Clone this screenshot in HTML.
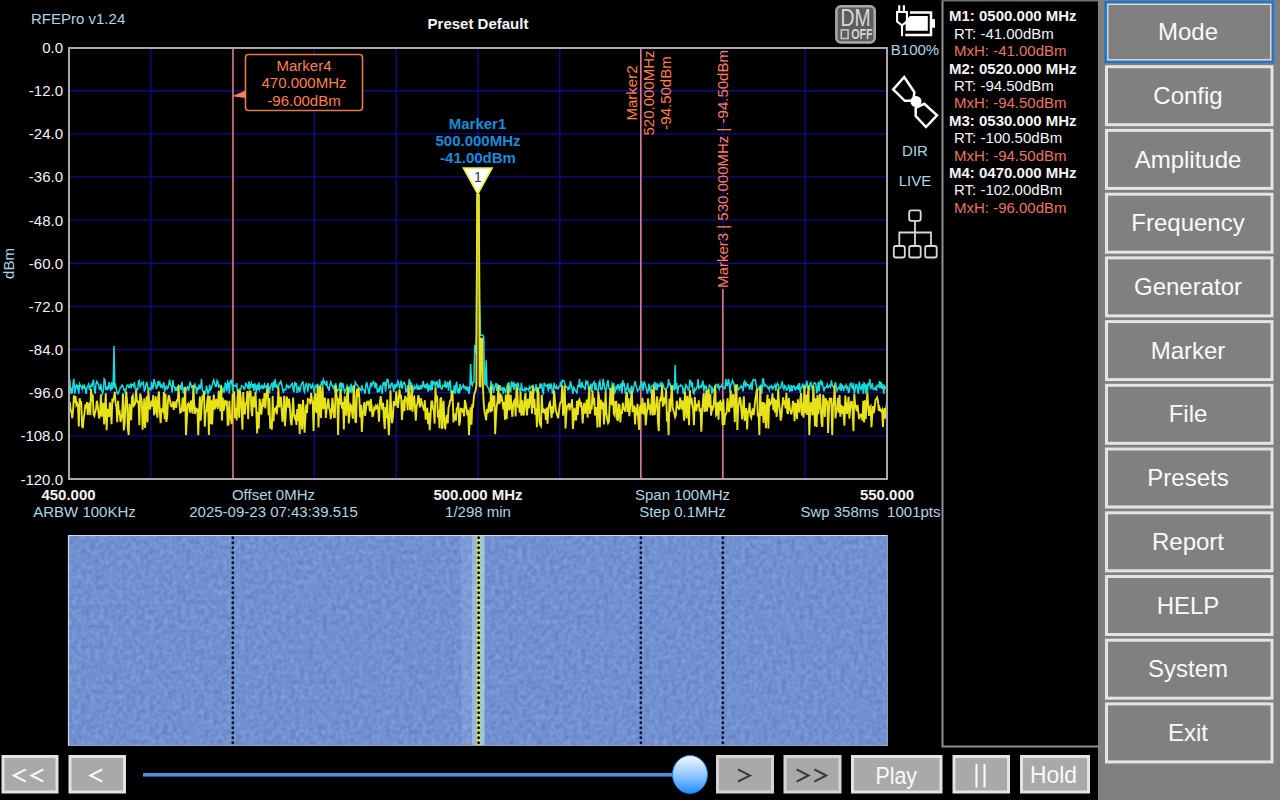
<!DOCTYPE html>
<html><head><meta charset="utf-8"><title>RFEPro</title>
<style>
html,body{margin:0;padding:0;background:#000;width:1280px;height:800px;overflow:hidden}
svg{position:absolute;left:0;top:0;display:block}
text{font-family:"Liberation Sans", sans-serif;}
</style></head><body>
<svg width="1280" height="800" viewBox="0 0 1280 800">
<defs>
<filter id="wfnoise" x="0" y="0" width="100%" height="100%" color-interpolation-filters="sRGB">
<feTurbulence type="fractalNoise" baseFrequency="0.22 0.2" numOctaves="2" seed="4" result="t"></feTurbulence>
<feColorMatrix in="t" type="matrix" values="0.17 0 0 0 0.355  0.17 0 0 0 0.48  0.15 0 0 0 0.74  0 0 0 0 1"></feColorMatrix>
</filter>
<linearGradient id="thumb" x1="0" y1="0" x2="0" y2="1">
<stop offset="0" stop-color="#f4f8ff"></stop><stop offset="0.55" stop-color="#8cc4ff"></stop><stop offset="1" stop-color="#1e8cff"></stop>
</linearGradient>
</defs>

<line x1="150.8" y1="47.5" x2="150.8" y2="479.0" stroke="#0c0c8a" stroke-width="1.35"></line>
<line x1="232.6" y1="47.5" x2="232.6" y2="479.0" stroke="#0c0c8a" stroke-width="1.35"></line>
<line x1="314.4" y1="47.5" x2="314.4" y2="479.0" stroke="#0c0c8a" stroke-width="1.35"></line>
<line x1="396.2" y1="47.5" x2="396.2" y2="479.0" stroke="#0c0c8a" stroke-width="1.35"></line>
<line x1="478.0" y1="47.5" x2="478.0" y2="479.0" stroke="#0c0c8a" stroke-width="1.35"></line>
<line x1="559.8" y1="47.5" x2="559.8" y2="479.0" stroke="#0c0c8a" stroke-width="1.35"></line>
<line x1="641.6" y1="47.5" x2="641.6" y2="479.0" stroke="#0c0c8a" stroke-width="1.35"></line>
<line x1="723.4" y1="47.5" x2="723.4" y2="479.0" stroke="#0c0c8a" stroke-width="1.35"></line>
<line x1="805.2" y1="47.5" x2="805.2" y2="479.0" stroke="#0c0c8a" stroke-width="1.35"></line>
<line x1="69.0" y1="90.7" x2="887.0" y2="90.7" stroke="#0c0c8a" stroke-width="1.35"></line>
<line x1="69.0" y1="133.8" x2="887.0" y2="133.8" stroke="#0c0c8a" stroke-width="1.35"></line>
<line x1="69.0" y1="176.9" x2="887.0" y2="176.9" stroke="#0c0c8a" stroke-width="1.35"></line>
<line x1="69.0" y1="220.1" x2="887.0" y2="220.1" stroke="#0c0c8a" stroke-width="1.35"></line>
<line x1="69.0" y1="263.2" x2="887.0" y2="263.2" stroke="#0c0c8a" stroke-width="1.35"></line>
<line x1="69.0" y1="306.4" x2="887.0" y2="306.4" stroke="#0c0c8a" stroke-width="1.35"></line>
<line x1="69.0" y1="349.6" x2="887.0" y2="349.6" stroke="#0c0c8a" stroke-width="1.35"></line>
<line x1="69.0" y1="392.7" x2="887.0" y2="392.7" stroke="#0c0c8a" stroke-width="1.35"></line>
<line x1="69.0" y1="435.9" x2="887.0" y2="435.9" stroke="#0c0c8a" stroke-width="1.35"></line>
<line x1="233" y1="47.5" x2="233" y2="479.0" stroke="#e07c6c" stroke-width="1.6"></line>
<line x1="640.8" y1="47.5" x2="640.8" y2="479.0" stroke="#e07c6c" stroke-width="1.6"></line>
<line x1="722.8" y1="289" x2="722.8" y2="479.0" stroke="#e07c6c" stroke-width="1.6"></line>
<polyline points="69.00,387.5 69.82,379.5 70.64,393.8 71.45,387.7 72.27,393.5 73.09,383.4 73.91,379.0 74.73,393.8 75.54,386.5 76.36,385.1 77.18,388.0 78.00,385.0 78.82,393.8 79.63,383.9 80.45,385.6 81.27,386.9 82.09,389.1 82.91,384.7 83.72,388.7 84.54,386.1 85.36,388.8 86.18,393.8 87.00,387.1 87.81,386.2 88.63,384.2 89.45,390.1 90.27,387.1 91.09,384.7 91.90,386.4 92.72,382.5 93.54,379.8 94.36,390.2 95.18,393.8 95.99,383.9 96.81,381.4 97.63,383.6 98.45,384.0 99.27,389.2 100.08,389.5 100.90,383.8 101.72,390.2 102.54,393.5 103.36,390.5 104.17,379.0 104.99,380.0 105.81,389.4 106.63,389.6 107.45,386.1 108.26,389.6 109.08,382.2 109.90,387.2 110.72,390.9 111.54,382.2 112.35,389.0 113.17,386.2 113.99,346.0 114.81,388.1 115.63,385.8 116.44,389.4 117.26,393.6 118.08,393.8 118.90,391.5 119.72,389.7 120.53,387.0 121.35,386.7 122.17,384.9 122.99,386.5 123.81,389.8 124.62,389.5 125.44,393.8 126.26,387.6 127.08,385.2 127.90,385.0 128.71,387.4 129.53,387.6 130.35,383.6 131.17,386.9 131.99,384.3 132.80,384.9 133.62,386.2 134.44,382.2 135.26,389.0 136.08,388.2 136.89,389.9 137.71,389.8 138.53,381.4 139.35,380.6 140.17,386.9 140.98,384.9 141.80,382.7 142.62,384.0 143.44,382.6 144.26,391.5 145.07,389.2 145.89,385.3 146.71,381.8 147.53,386.6 148.35,389.9 149.16,388.2 149.98,389.3 150.80,390.0 151.62,381.5 152.44,389.2 153.25,386.9 154.07,379.2 154.89,382.7 155.71,385.7 156.53,389.1 157.34,385.5 158.16,381.1 158.98,384.7 159.80,382.4 160.62,386.6 161.43,385.1 162.25,387.7 163.07,385.4 163.89,382.3 164.71,392.1 165.52,387.2 166.34,386.1 167.16,389.0 167.98,388.1 168.80,384.1 169.61,379.7 170.43,384.7 171.25,385.8 172.07,392.5 172.89,380.0 173.70,386.7 174.52,387.1 175.34,391.0 176.16,387.2 176.98,390.9 177.79,386.7 178.61,385.3 179.43,386.8 180.25,385.9 181.07,390.0 181.88,381.8 182.70,389.3 183.52,393.5 184.34,387.6 185.16,387.3 185.97,390.6 186.79,388.2 187.61,385.9 188.43,391.2 189.25,387.4 190.06,381.8 190.88,384.5 191.70,387.5 192.52,386.5 193.34,385.5 194.15,387.1 194.97,384.3 195.79,387.3 196.61,393.8 197.43,387.0 198.24,390.1 199.06,384.6 199.88,389.1 200.70,386.4 201.52,379.1 202.33,390.7 203.15,391.0 203.97,391.2 204.79,393.8 205.61,393.7 206.42,385.6 207.24,389.2 208.06,393.7 208.88,392.3 209.70,384.7 210.51,389.7 211.33,388.3 212.15,385.8 212.97,382.1 213.79,380.0 214.60,383.2 215.42,386.4 216.24,386.3 217.06,380.5 217.88,381.8 218.69,388.1 219.51,385.3 220.33,385.9 221.15,385.5 221.97,388.7 222.78,391.7 223.60,388.9 224.42,392.5 225.24,382.5 226.06,385.0 226.87,391.3 227.69,381.9 228.51,383.7 229.33,393.8 230.15,380.3 230.96,384.0 231.78,379.5 232.60,391.4 233.42,385.0 234.24,385.4 235.05,386.2 235.87,386.3 236.69,383.2 237.51,392.3 238.33,390.1 239.14,392.0 239.96,389.0 240.78,389.1 241.60,385.6 242.42,386.0 243.23,386.8 244.05,389.4 244.87,388.5 245.69,383.5 246.51,384.2 247.32,386.6 248.14,388.1 248.96,381.4 249.78,389.1 250.60,384.6 251.41,382.8 252.23,387.9 253.05,384.0 253.87,391.0 254.69,383.3 255.50,386.2 256.32,392.7 257.14,384.5 257.96,390.2 258.78,382.3 259.59,389.4 260.41,387.5 261.23,385.9 262.05,388.1 262.87,386.0 263.68,388.9 264.50,384.5 265.32,386.9 266.14,386.2 266.96,391.2 267.77,382.8 268.59,386.8 269.41,393.4 270.23,386.6 271.05,385.3 271.86,383.1 272.68,390.8 273.50,381.4 274.32,387.5 275.14,379.0 275.95,387.5 276.77,384.5 277.59,388.3 278.41,387.8 279.23,383.0 280.04,383.7 280.86,381.4 281.68,383.9 282.50,389.0 283.32,392.9 284.13,389.3 284.95,389.4 285.77,389.9 286.59,384.9 287.41,385.8 288.22,387.9 289.04,386.3 289.86,387.5 290.68,386.2 291.50,384.2 292.31,383.5 293.13,389.4 293.95,392.4 294.77,381.8 295.59,386.5 296.40,383.0 297.22,392.9 298.04,388.1 298.86,386.8 299.68,392.1 300.49,388.8 301.31,384.3 302.13,383.1 302.95,381.2 303.77,390.1 304.58,392.0 305.40,385.1 306.22,383.6 307.04,386.3 307.86,391.6 308.67,384.1 309.49,384.1 310.31,385.0 311.13,388.7 311.95,385.9 312.76,384.1 313.58,389.0 314.40,393.6 315.22,385.8 316.04,385.2 316.85,386.9 317.67,383.7 318.49,389.1 319.31,387.2 320.13,385.5 320.94,384.9 321.76,381.2 322.58,386.8 323.40,379.6 324.22,381.4 325.03,384.1 325.85,384.8 326.67,380.6 327.49,387.6 328.31,387.3 329.12,390.8 329.94,385.2 330.76,382.1 331.58,385.0 332.40,385.4 333.21,387.7 334.03,386.3 334.85,392.1 335.67,383.2 336.49,388.4 337.30,390.9 338.12,389.6 338.94,389.9 339.76,383.9 340.58,383.1 341.39,391.8 342.21,383.6 343.03,383.8 343.85,389.0 344.67,392.3 345.48,389.6 346.30,389.2 347.12,385.7 347.94,387.6 348.76,393.8 349.57,386.1 350.39,392.5 351.21,383.7 352.03,391.3 352.85,389.4 353.66,385.5 354.48,388.9 355.30,382.3 356.12,383.9 356.94,384.8 357.75,385.8 358.57,387.5 359.39,388.8 360.21,388.9 361.03,390.5 361.84,385.1 362.66,389.6 363.48,389.5 364.30,390.7 365.12,393.8 365.93,384.8 366.75,382.2 367.57,386.3 368.39,390.5 369.21,393.8 370.02,386.3 370.84,382.6 371.66,385.9 372.48,383.6 373.30,381.6 374.11,382.9 374.93,388.5 375.75,383.2 376.57,384.2 377.39,392.5 378.20,388.4 379.02,392.1 379.84,387.3 380.66,384.9 381.48,390.8 382.29,393.8 383.11,382.3 383.93,385.6 384.75,381.7 385.57,391.7 386.38,383.1 387.20,379.5 388.02,379.7 388.84,387.7 389.66,386.0 390.47,387.5 391.29,383.4 392.11,383.2 392.93,386.6 393.75,391.8 394.56,384.3 395.38,388.6 396.20,384.7 397.02,386.0 397.84,381.1 398.65,382.9 399.47,388.6 400.29,385.7 401.11,380.6 401.93,388.9 402.74,385.4 403.56,382.7 404.38,382.4 405.20,385.1 406.02,391.7 406.83,391.5 407.65,386.1 408.47,385.5 409.29,379.0 410.11,390.0 410.92,382.9 411.74,384.2 412.56,393.0 413.38,389.9 414.20,386.3 415.01,388.7 415.83,387.5 416.65,385.3 417.47,389.9 418.29,385.3 419.10,389.2 419.92,388.9 420.74,385.0 421.56,389.0 422.38,385.9 423.19,381.2 424.01,386.8 424.83,387.5 425.65,384.3 426.47,388.3 427.28,383.1 428.10,391.6 428.92,384.7 429.74,388.8 430.56,389.8 431.37,380.6 432.19,390.0 433.01,380.6 433.83,384.6 434.65,381.7 435.46,387.4 436.28,382.6 437.10,381.7 437.92,387.4 438.74,387.4 439.55,379.0 440.37,386.3 441.19,388.5 442.01,389.2 442.83,385.3 443.64,385.8 444.46,386.3 445.28,380.8 446.10,388.1 446.92,385.2 447.73,381.7 448.55,390.6 449.37,383.2 450.19,380.4 451.01,391.8 451.82,390.9 452.64,390.7 453.46,393.6 454.28,385.3 455.10,393.6 455.91,385.2 456.73,381.7 457.55,392.8 458.37,388.1 459.19,393.8 460.00,384.1 460.82,389.6 461.64,387.9 462.46,386.8 463.28,385.0 464.09,388.2 464.91,386.9 465.73,388.9 466.55,386.5 467.37,391.2 468.18,386.7 469.00,393.8 469.82,388.7 470.64,363.9 471.46,383.7 472.27,385.5 473.09,381.9 473.91,381.9 474.73,344.9 475.55,353.1 476.36,335.2 477.18,194.9 478.00,194.9 478.82,194.9 479.64,299.2 480.45,335.2 481.27,335.2 482.09,335.2 482.91,335.2 483.73,337.0 484.54,381.9 485.36,385.5 486.18,360.3 487.00,385.5 487.82,387.5 488.63,387.9 489.45,391.9 490.27,390.7 491.09,380.9 491.91,389.7 492.72,383.9 493.54,393.0 494.36,387.9 495.18,386.0 496.00,383.2 496.81,391.0 497.63,384.8 498.45,385.5 499.27,389.6 500.09,385.2 500.90,390.2 501.72,389.8 502.54,387.0 503.36,393.8 504.18,387.3 504.99,390.5 505.81,392.2 506.63,388.5 507.45,384.2 508.27,385.5 509.08,382.4 509.90,391.1 510.72,391.7 511.54,381.4 512.36,385.5 513.17,383.5 513.99,389.9 514.81,384.1 515.63,386.0 516.45,384.6 517.26,386.9 518.08,382.6 518.90,389.3 519.72,390.4 520.54,392.0 521.35,382.8 522.17,389.6 522.99,390.7 523.81,390.3 524.63,388.5 525.44,391.5 526.26,388.0 527.08,389.2 527.90,388.9 528.72,390.4 529.53,386.8 530.35,388.6 531.17,386.5 531.99,386.1 532.81,385.5 533.62,393.8 534.44,388.9 535.26,389.8 536.08,384.2 536.90,392.6 537.71,387.9 538.53,388.0 539.35,388.2 540.17,383.4 540.99,388.5 541.80,383.5 542.62,392.2 543.44,393.5 544.26,382.6 545.08,385.4 545.89,385.2 546.71,386.5 547.53,385.2 548.35,391.3 549.17,383.5 549.98,388.9 550.80,383.4 551.62,386.6 552.44,393.8 553.26,391.6 554.07,382.9 554.89,387.4 555.71,388.4 556.53,386.1 557.35,388.5 558.16,388.9 558.98,386.6 559.80,386.4 560.62,381.5 561.44,386.8 562.25,380.2 563.07,380.5 563.89,380.8 564.71,383.1 565.53,386.5 566.34,386.5 567.16,387.5 567.98,389.6 568.80,387.2 569.62,389.3 570.43,381.1 571.25,385.0 572.07,388.6 572.89,393.8 573.71,387.1 574.52,388.4 575.34,390.9 576.16,391.0 576.98,393.8 577.80,384.9 578.61,387.2 579.43,379.0 580.25,387.1 581.07,387.5 581.89,381.8 582.70,386.5 583.52,386.3 584.34,388.3 585.16,389.1 585.98,381.6 586.79,383.3 587.61,380.8 588.43,388.2 589.25,386.8 590.07,390.1 590.88,383.5 591.70,392.0 592.52,384.9 593.34,383.0 594.16,381.9 594.97,390.3 595.79,383.0 596.61,389.5 597.43,389.7 598.25,391.7 599.06,382.8 599.88,381.0 600.70,389.1 601.52,389.7 602.34,388.2 603.15,379.0 603.97,383.3 604.79,388.9 605.61,391.2 606.43,389.4 607.24,382.7 608.06,380.2 608.88,387.9 609.70,389.4 610.52,388.8 611.33,393.7 612.15,383.7 612.97,385.5 613.79,383.1 614.61,393.1 615.42,391.5 616.24,385.9 617.06,389.7 617.88,384.1 618.70,386.9 619.51,391.2 620.33,384.7 621.15,383.9 621.97,393.8 622.79,380.4 623.60,385.2 624.42,384.2 625.24,393.6 626.06,389.5 626.88,388.2 627.69,383.1 628.51,392.2 629.33,390.1 630.15,393.8 630.97,387.8 631.78,385.7 632.60,393.0 633.42,389.1 634.24,385.1 635.06,381.2 635.87,384.6 636.69,388.0 637.51,391.2 638.33,390.3 639.15,389.3 639.96,386.4 640.78,387.1 641.60,381.0 642.42,385.9 643.24,390.8 644.05,381.4 644.87,383.5 645.69,386.6 646.51,389.5 647.33,393.7 648.14,390.6 648.96,383.7 649.78,389.8 650.60,391.7 651.42,386.2 652.23,386.1 653.05,384.8 653.87,384.6 654.69,381.9 655.51,390.0 656.32,383.4 657.14,390.5 657.96,384.5 658.78,386.3 659.60,386.1 660.41,383.5 661.23,387.0 662.05,382.9 662.87,383.8 663.69,386.5 664.50,389.0 665.32,389.7 666.14,388.8 666.96,387.7 667.78,387.0 668.59,379.0 669.41,384.7 670.23,384.2 671.05,390.0 671.87,385.5 672.68,388.1 673.50,386.3 674.32,390.7 675.14,365.0 675.96,389.0 676.77,383.1 677.59,393.8 678.41,387.0 679.23,385.9 680.05,386.3 680.86,384.8 681.68,385.9 682.50,386.4 683.32,393.8 684.14,389.5 684.95,391.6 685.77,384.7 686.59,385.8 687.41,387.6 688.23,389.9 689.04,389.0 689.86,380.3 690.68,380.7 691.50,387.2 692.32,382.3 693.13,392.7 693.95,393.8 694.77,388.7 695.59,390.1 696.41,389.0 697.22,386.3 698.04,379.0 698.86,389.3 699.68,386.8 700.50,386.0 701.31,387.1 702.13,383.6 702.95,380.6 703.77,391.4 704.59,386.4 705.40,387.9 706.22,385.7 707.04,392.5 707.86,393.3 708.68,389.1 709.49,385.1 710.31,386.3 711.13,386.7 711.95,393.8 712.77,388.3 713.58,389.7 714.40,392.0 715.22,385.5 716.04,384.4 716.86,385.0 717.67,387.0 718.49,385.1 719.31,389.1 720.13,386.7 720.95,386.8 721.76,385.0 722.58,387.2 723.40,387.5 724.22,387.4 725.04,389.3 725.85,379.0 726.67,385.1 727.49,385.4 728.31,379.0 729.13,381.9 729.94,392.5 730.76,384.4 731.58,383.9 732.40,380.2 733.22,382.2 734.03,384.2 734.85,391.2 735.67,385.5 736.49,385.5 737.31,385.1 738.12,390.6 738.94,388.3 739.76,388.4 740.58,386.7 741.40,385.7 742.21,388.0 743.03,391.4 743.85,382.5 744.67,381.2 745.49,387.3 746.30,383.3 747.12,385.3 747.94,384.6 748.76,385.2 749.58,389.7 750.39,384.9 751.21,383.3 752.03,390.2 752.85,379.9 753.67,379.4 754.48,380.4 755.30,379.8 756.12,384.3 756.94,388.2 757.76,389.1 758.57,389.9 759.39,386.5 760.21,386.6 761.03,384.5 761.85,393.8 762.66,379.0 763.48,379.0 764.30,387.0 765.12,384.5 765.94,385.2 766.75,386.0 767.57,387.7 768.39,387.4 769.21,389.9 770.03,386.3 770.84,387.0 771.66,385.8 772.48,390.0 773.30,386.8 774.12,386.8 774.93,384.8 775.75,390.8 776.57,385.4 777.39,383.4 778.21,384.8 779.02,388.3 779.84,388.7 780.66,387.8 781.48,384.3 782.30,381.4 783.11,387.5 783.93,389.3 784.75,385.6 785.57,386.2 786.39,390.2 787.20,389.6 788.02,387.3 788.84,384.5 789.66,391.2 790.48,390.6 791.29,385.2 792.11,391.4 792.93,386.6 793.75,385.7 794.57,387.3 795.38,390.6 796.20,387.2 797.02,388.1 797.84,385.7 798.66,390.0 799.47,383.0 800.29,393.0 801.11,387.6 801.93,386.9 802.75,383.5 803.56,389.1 804.38,385.0 805.20,389.0 806.02,384.3 806.84,380.7 807.65,388.4 808.47,385.4 809.29,390.3 810.11,383.4 810.93,382.6 811.74,386.8 812.56,391.0 813.38,385.5 814.20,382.8 815.02,383.0 815.83,384.0 816.65,393.5 817.47,389.4 818.29,381.8 819.11,391.4 819.92,382.9 820.74,380.2 821.56,384.2 822.38,382.9 823.20,388.1 824.01,391.4 824.83,387.3 825.65,387.7 826.47,387.1 827.29,384.4 828.10,387.5 828.92,386.3 829.74,385.4 830.56,387.0 831.38,380.3 832.19,385.4 833.01,386.6 833.83,387.7 834.65,385.5 835.47,382.1 836.28,386.4 837.10,390.8 837.92,389.0 838.74,387.4 839.56,388.5 840.37,383.0 841.19,391.1 842.01,385.2 842.83,386.4 843.65,391.2 844.46,386.8 845.28,387.3 846.10,385.1 846.92,388.6 847.74,385.9 848.55,392.9 849.37,390.8 850.19,384.1 851.01,383.2 851.83,387.0 852.64,389.1 853.46,383.1 854.28,393.8 855.10,389.8 855.92,384.5 856.73,384.6 857.55,390.7 858.37,393.7 859.19,381.7 860.01,386.4 860.82,390.2 861.64,386.8 862.46,383.7 863.28,393.8 864.10,383.0 864.91,384.3 865.73,393.8 866.55,384.2 867.37,392.5 868.19,382.8 869.00,385.5 869.82,379.0 870.64,389.1 871.46,386.9 872.28,383.2 873.09,389.2 873.91,389.5 874.73,388.3 875.55,387.2 876.37,390.8 877.18,385.2 878.00,385.0 878.82,386.7 879.64,380.8 880.46,388.1 881.27,382.2 882.09,388.9 882.91,384.2 883.73,393.8 884.55,386.2 885.36,387.6 886.18,388.7 887.00,389.1" fill="none" stroke="#16dce0" stroke-width="1.5"></polyline>
<polyline points="69.00,410.7 69.82,402.1 70.64,410.3 71.45,411.3 72.27,418.2 73.09,410.2 73.91,395.4 74.73,403.1 75.54,396.2 76.36,405.0 77.18,403.4 78.00,405.7 78.82,426.4 79.63,398.3 80.45,402.2 81.27,402.2 82.09,426.7 82.91,427.2 83.72,417.7 84.54,413.0 85.36,404.4 86.18,408.3 87.00,402.0 87.81,415.0 88.63,404.4 89.45,403.4 90.27,415.2 91.09,388.7 91.90,401.6 92.72,394.5 93.54,414.7 94.36,416.0 95.18,411.6 95.99,409.0 96.81,400.8 97.63,405.0 98.45,412.8 99.27,418.5 100.08,413.6 100.90,394.2 101.72,416.8 102.54,405.1 103.36,403.0 104.17,424.4 104.99,407.3 105.81,393.2 106.63,430.3 107.45,411.4 108.26,409.0 109.08,416.9 109.90,402.3 110.72,408.5 111.54,424.1 112.35,398.6 113.17,400.3 113.99,397.3 114.81,391.7 115.63,403.8 116.44,406.5 117.26,422.3 118.08,400.9 118.90,414.6 119.72,412.8 120.53,421.9 121.35,418.6 122.17,413.7 122.99,393.4 123.81,430.5 124.62,424.1 125.44,405.1 126.26,391.7 127.08,401.4 127.90,429.0 128.71,435.1 129.53,403.8 130.35,416.0 131.17,420.3 131.99,396.9 132.80,395.5 133.62,406.0 134.44,405.1 135.26,403.0 136.08,390.0 136.89,400.9 137.71,402.0 138.53,401.7 139.35,425.3 140.17,393.5 140.98,397.2 141.80,401.9 142.62,429.8 143.44,414.9 144.26,398.4 145.07,428.0 145.89,409.9 146.71,396.4 147.53,422.4 148.35,389.9 149.16,401.6 149.98,409.5 150.80,404.2 151.62,400.6 152.44,406.5 153.25,395.0 154.07,415.2 154.89,412.4 155.71,396.2 156.53,407.5 157.34,417.6 158.16,397.3 158.98,391.5 159.80,412.8 160.62,423.2 161.43,409.3 162.25,409.5 163.07,411.1 163.89,392.1 164.71,419.2 165.52,393.8 166.34,421.9 167.16,416.6 167.98,400.8 168.80,395.2 169.61,398.2 170.43,404.0 171.25,406.2 172.07,406.1 172.89,401.4 173.70,409.8 174.52,404.7 175.34,401.4 176.16,407.8 176.98,399.3 177.79,401.5 178.61,385.5 179.43,404.2 180.25,412.6 181.07,412.0 181.88,407.9 182.70,397.5 183.52,411.6 184.34,403.5 185.16,387.3 185.97,435.1 186.79,420.3 187.61,405.1 188.43,403.4 189.25,405.1 190.06,412.6 190.88,400.5 191.70,404.7 192.52,413.6 193.34,385.5 194.15,403.8 194.97,414.0 195.79,408.9 196.61,410.3 197.43,408.5 198.24,435.1 199.06,413.2 199.88,396.6 200.70,420.8 201.52,408.5 202.33,397.2 203.15,398.3 203.97,391.2 204.79,426.8 205.61,411.7 206.42,411.6 207.24,400.9 208.06,395.6 208.88,435.1 209.70,395.7 210.51,423.9 211.33,400.2 212.15,424.4 212.97,405.8 213.79,394.5 214.60,409.5 215.42,405.7 216.24,398.9 217.06,406.2 217.88,408.8 218.69,390.7 219.51,396.1 220.33,411.1 221.15,385.5 221.97,420.6 222.78,397.6 223.60,410.8 224.42,406.3 225.24,399.9 226.06,405.3 226.87,400.7 227.69,424.8 228.51,424.6 229.33,400.9 230.15,418.5 230.96,419.2 231.78,424.2 232.60,393.7 233.42,399.5 234.24,391.4 235.05,418.3 235.87,407.8 236.69,420.5 237.51,399.3 238.33,390.1 239.14,417.7 239.96,390.4 240.78,396.8 241.60,409.8 242.42,429.8 243.23,392.1 244.05,408.9 244.87,414.5 245.69,403.3 246.51,403.2 247.32,391.1 248.14,419.2 248.96,395.1 249.78,391.2 250.60,391.6 251.41,409.8 252.23,416.1 253.05,396.4 253.87,406.5 254.69,406.4 255.50,391.9 256.32,410.7 257.14,433.4 257.96,412.1 258.78,428.5 259.59,398.7 260.41,404.3 261.23,414.6 262.05,407.9 262.87,398.5 263.68,406.9 264.50,393.0 265.32,408.5 266.14,396.2 266.96,391.2 267.77,389.9 268.59,415.3 269.41,398.0 270.23,428.7 271.05,419.9 271.86,429.7 272.68,395.9 273.50,421.5 274.32,407.9 275.14,409.9 275.95,408.1 276.77,414.4 277.59,405.2 278.41,387.8 279.23,407.3 280.04,401.9 280.86,396.6 281.68,410.0 282.50,421.8 283.32,414.0 284.13,395.8 284.95,426.2 285.77,414.5 286.59,396.6 287.41,399.0 288.22,407.7 289.04,398.8 289.86,406.0 290.68,420.9 291.50,425.2 292.31,414.9 293.13,397.5 293.95,414.1 294.77,417.9 295.59,416.4 296.40,424.9 297.22,409.1 298.04,421.0 298.86,403.7 299.68,434.1 300.49,404.1 301.31,415.0 302.13,429.5 302.95,399.7 303.77,410.9 304.58,432.7 305.40,417.6 306.22,404.6 307.04,412.9 307.86,399.1 308.67,399.5 309.49,400.4 310.31,404.2 311.13,392.9 311.95,400.4 312.76,402.8 313.58,431.0 314.40,397.8 315.22,393.2 316.04,411.1 316.85,413.0 317.67,386.2 318.49,427.4 319.31,402.6 320.13,385.5 320.94,418.1 321.76,400.1 322.58,386.8 323.40,409.1 324.22,401.5 325.03,397.7 325.85,417.9 326.67,408.8 327.49,404.5 328.31,398.6 329.12,408.2 329.94,410.0 330.76,419.1 331.58,411.8 332.40,397.9 333.21,406.7 334.03,417.3 334.85,417.2 335.67,385.5 336.49,395.1 337.30,400.7 338.12,435.1 338.94,400.9 339.76,402.4 340.58,389.0 341.39,403.0 342.21,408.6 343.03,402.0 343.85,429.5 344.67,396.3 345.48,404.2 346.30,415.6 347.12,393.0 347.94,387.6 348.76,423.4 349.57,415.2 350.39,404.6 351.21,405.8 352.03,412.2 352.85,418.7 353.66,385.5 354.48,396.2 355.30,421.1 356.12,422.8 356.94,388.8 357.75,396.8 358.57,387.5 359.39,398.8 360.21,417.5 361.03,404.9 361.84,431.9 362.66,416.1 363.48,408.5 364.30,402.0 365.12,415.9 365.93,409.2 366.75,402.7 367.57,403.6 368.39,400.7 369.21,405.5 370.02,411.4 370.84,399.0 371.66,407.3 372.48,417.0 373.30,414.8 374.11,407.8 374.93,409.0 375.75,406.1 376.57,407.8 377.39,405.8 378.20,409.3 379.02,421.8 379.84,403.1 380.66,396.1 381.48,403.0 382.29,409.9 383.11,402.8 383.93,418.6 384.75,428.9 385.57,407.1 386.38,418.2 387.20,399.6 388.02,419.9 388.84,435.1 389.66,419.4 390.47,390.2 391.29,412.1 392.11,423.1 392.93,416.3 393.75,402.0 394.56,402.3 395.38,405.8 396.20,391.3 397.02,399.9 397.84,408.0 398.65,401.2 399.47,389.4 400.29,397.0 401.11,396.4 401.93,419.9 402.74,409.5 403.56,399.7 404.38,411.1 405.20,395.9 406.02,401.2 406.83,397.7 407.65,410.2 408.47,385.5 409.29,394.0 410.11,410.2 410.92,406.8 411.74,385.5 412.56,411.6 413.38,398.1 414.20,396.9 415.01,407.7 415.83,420.8 416.65,405.7 417.47,403.8 418.29,395.2 419.10,399.1 419.92,407.5 420.74,398.3 421.56,401.8 422.38,405.5 423.19,407.2 424.01,410.5 424.83,400.2 425.65,419.6 426.47,414.8 427.28,407.7 428.10,424.1 428.92,412.7 429.74,430.2 430.56,415.4 431.37,401.5 432.19,401.5 433.01,408.4 433.83,410.4 434.65,423.6 435.46,387.4 436.28,402.1 437.10,395.6 437.92,417.6 438.74,409.9 439.55,428.1 440.37,399.1 441.19,397.4 442.01,429.0 442.83,408.4 443.64,400.8 444.46,427.4 445.28,428.2 446.10,419.7 446.92,414.8 447.73,423.4 448.55,407.4 449.37,405.0 450.19,400.7 451.01,400.0 451.82,391.1 452.64,394.8 453.46,422.4 454.28,413.4 455.10,419.6 455.91,419.8 456.73,408.7 457.55,407.7 458.37,402.3 459.19,425.5 460.00,421.6 460.82,408.1 461.64,410.0 462.46,411.3 463.28,408.5 464.09,416.3 464.91,400.0 465.73,403.9 466.55,408.8 467.37,415.3 468.18,409.7 469.00,435.1 469.82,418.7 470.64,407.4 471.46,424.6 472.27,405.6 473.09,406.2 473.91,396.3 474.73,392.7 475.55,390.9 476.36,385.5 477.18,194.9 478.00,194.9 478.82,194.9 479.64,385.5 480.45,387.3 481.27,338.8 482.09,338.8 482.91,385.5 483.73,403.5 484.54,412.0 485.36,416.1 486.18,420.2 487.00,409.1 487.82,413.3 488.63,406.6 489.45,402.0 490.27,412.4 491.09,385.5 491.91,411.4 492.72,395.5 493.54,406.4 494.36,395.4 495.18,434.3 496.00,416.2 496.81,405.0 497.63,401.1 498.45,385.5 499.27,404.2 500.09,393.5 500.90,399.3 501.72,397.2 502.54,402.1 503.36,409.5 504.18,402.1 504.99,419.8 505.81,394.6 506.63,419.1 507.45,405.0 508.27,385.5 509.08,410.3 509.90,407.6 510.72,394.8 511.54,407.5 512.36,416.8 513.17,404.9 513.99,401.3 514.81,399.9 515.63,416.4 516.45,388.3 517.26,389.2 518.08,407.6 518.90,404.8 519.72,412.6 520.54,392.0 521.35,415.7 522.17,400.3 522.99,413.1 523.81,415.5 524.63,399.8 525.44,392.9 526.26,407.9 527.08,415.4 527.90,398.8 528.72,408.4 529.53,404.3 530.35,390.8 531.17,395.2 531.99,413.6 532.81,385.5 533.62,407.8 534.44,399.0 535.26,415.0 536.08,408.3 536.90,427.3 537.71,387.9 538.53,392.6 539.35,421.3 540.17,424.6 540.99,425.9 541.80,394.7 542.62,412.9 543.44,408.5 544.26,411.3 545.08,409.2 545.89,419.9 546.71,407.5 547.53,423.8 548.35,408.6 549.17,404.4 549.98,402.6 550.80,410.4 551.62,417.9 552.44,406.0 553.26,413.2 554.07,390.3 554.89,399.2 555.71,409.1 556.53,413.1 557.35,415.6 558.16,418.2 558.98,411.7 559.80,404.5 560.62,402.1 561.44,401.5 562.25,385.5 563.07,415.7 563.89,407.7 564.71,385.5 565.53,428.6 566.34,413.6 567.16,405.9 567.98,406.1 568.80,403.3 569.62,410.5 570.43,403.7 571.25,407.2 572.07,399.2 572.89,428.9 573.71,417.7 574.52,407.8 575.34,419.3 576.16,419.4 576.98,400.8 577.80,415.0 578.61,400.7 579.43,399.5 580.25,404.4 581.07,402.1 581.89,409.0 582.70,423.5 583.52,408.1 584.34,402.7 585.16,413.7 585.98,408.9 586.79,399.5 587.61,417.6 588.43,400.7 589.25,387.0 590.07,414.0 590.88,406.2 591.70,409.5 592.52,390.6 593.34,404.3 594.16,397.8 594.97,415.5 595.79,408.0 596.61,407.9 597.43,427.6 598.25,391.7 599.06,397.8 599.88,427.3 600.70,399.5 601.52,409.3 602.34,402.8 603.15,403.7 603.97,424.5 604.79,410.2 605.61,391.2 606.43,414.2 607.24,419.2 608.06,423.0 608.88,421.4 609.70,404.1 610.52,388.9 611.33,403.0 612.15,405.1 612.97,385.5 613.79,413.6 614.61,415.3 615.42,401.9 616.24,401.7 617.06,419.1 617.88,420.8 618.70,404.6 619.51,405.0 620.33,422.4 621.15,410.1 621.97,413.9 622.79,402.7 623.60,409.1 624.42,408.8 625.24,411.7 626.06,396.1 626.88,392.3 627.69,411.9 628.51,398.4 629.33,416.2 630.15,407.0 630.97,399.4 631.78,390.9 632.60,412.1 633.42,408.6 634.24,405.6 635.06,424.5 635.87,407.6 636.69,415.3 637.51,403.7 638.33,420.4 639.15,429.8 639.96,407.4 640.78,404.9 641.60,413.9 642.42,397.9 643.24,410.8 644.05,414.6 644.87,402.5 645.69,425.3 646.51,415.4 647.33,408.0 648.14,398.3 648.96,409.6 649.78,404.4 650.60,415.1 651.42,404.4 652.23,389.3 653.05,415.5 653.87,385.5 654.69,415.0 655.51,407.6 656.32,405.9 657.14,396.4 657.96,421.6 658.78,431.2 659.60,401.0 660.41,398.9 661.23,400.9 662.05,385.5 662.87,405.5 663.69,405.0 664.50,397.4 665.32,403.7 666.14,389.3 666.96,421.6 667.78,412.0 668.59,435.1 669.41,398.7 670.23,412.0 671.05,397.5 671.87,385.5 672.68,407.9 673.50,410.6 674.32,413.4 675.14,417.1 675.96,414.8 676.77,400.7 677.59,407.4 678.41,407.1 679.23,409.7 680.05,397.6 680.86,402.3 681.68,409.4 682.50,400.4 683.32,409.5 684.14,420.7 684.95,391.6 685.77,402.6 686.59,418.5 687.41,395.8 688.23,404.0 689.04,425.2 689.86,389.9 690.68,404.1 691.50,397.9 692.32,405.6 693.13,409.5 693.95,425.1 694.77,397.0 695.59,407.5 696.41,411.0 697.22,403.9 698.04,406.9 698.86,400.3 699.68,411.9 700.50,408.2 701.31,431.6 702.13,412.5 702.95,400.3 703.77,392.9 704.59,411.9 705.40,409.2 706.22,390.2 707.04,411.4 707.86,399.6 708.68,389.1 709.49,407.4 710.31,394.1 711.13,415.7 711.95,405.5 712.77,408.7 713.58,406.5 714.40,395.2 715.22,385.5 716.04,415.2 716.86,414.2 717.67,402.3 718.49,419.6 719.31,402.3 720.13,401.4 720.95,410.9 721.76,401.9 722.58,425.1 723.40,399.3 724.22,425.0 725.04,415.6 725.85,414.0 726.67,412.3 727.49,398.2 728.31,406.9 729.13,412.2 729.94,401.7 730.76,390.2 731.58,407.7 732.40,403.7 733.22,394.0 734.03,404.8 734.85,422.1 735.67,385.5 736.49,385.5 737.31,429.9 738.12,408.2 738.94,403.2 739.76,397.0 740.58,400.3 741.40,410.8 742.21,419.5 743.03,406.7 743.85,396.3 744.67,419.9 745.49,419.3 746.30,408.1 747.12,429.4 747.94,410.7 748.76,412.7 749.58,402.8 750.39,415.6 751.21,417.6 752.03,412.2 752.85,408.4 753.67,415.2 754.48,407.7 755.30,399.4 756.12,394.6 756.94,388.8 757.76,416.5 758.57,412.5 759.39,435.1 760.21,386.6 761.03,415.9 761.85,408.2 762.66,402.0 763.48,422.9 764.30,402.6 765.12,408.1 765.94,428.2 766.75,404.5 767.57,394.5 768.39,428.6 769.21,398.8 770.03,405.5 770.84,402.5 771.66,402.9 772.48,393.3 773.30,410.3 774.12,398.1 774.93,412.4 775.75,399.7 776.57,416.9 777.39,409.0 778.21,388.5 779.02,402.8 779.84,409.6 780.66,420.6 781.48,416.6 782.30,405.6 783.11,397.3 783.93,403.1 784.75,402.0 785.57,408.3 786.39,392.7 787.20,412.2 788.02,413.9 788.84,397.9 789.66,407.1 790.48,410.9 791.29,414.2 792.11,410.7 792.93,400.9 793.75,403.9 794.57,421.3 795.38,403.1 796.20,405.8 797.02,419.0 797.84,399.2 798.66,410.9 799.47,411.5 800.29,398.9 801.11,393.1 801.93,415.5 802.75,402.9 803.56,417.6 804.38,385.5 805.20,413.3 806.02,394.5 806.84,415.0 807.65,398.8 808.47,385.5 809.29,435.1 810.11,412.6 810.93,402.2 811.74,408.8 812.56,415.3 813.38,385.5 814.20,406.9 815.02,426.1 815.83,398.3 816.65,427.0 817.47,395.0 818.29,414.2 819.11,406.2 819.92,393.7 820.74,406.5 821.56,423.3 822.38,426.7 823.20,394.6 824.01,399.5 824.83,416.9 825.65,398.2 826.47,402.3 827.29,400.6 828.10,433.0 828.92,411.2 829.74,397.8 830.56,399.6 831.38,398.0 832.19,435.1 833.01,405.9 833.83,402.3 834.65,385.5 835.47,418.4 836.28,411.5 837.10,407.4 837.92,397.9 838.74,412.7 839.56,395.0 840.37,416.6 841.19,404.8 842.01,413.7 842.83,406.0 843.65,415.5 844.46,425.6 845.28,395.6 846.10,404.4 846.92,414.0 847.74,405.6 848.55,396.8 849.37,418.7 850.19,409.0 851.01,401.8 851.83,401.9 852.64,411.5 853.46,431.3 854.28,393.9 855.10,404.1 855.92,407.7 856.73,410.9 857.55,404.9 858.37,412.5 859.19,419.2 860.01,416.0 860.82,414.5 861.64,414.6 862.46,420.7 863.28,400.7 864.10,422.4 864.91,400.4 865.73,419.1 866.55,403.9 867.37,392.5 868.19,405.5 869.00,415.9 869.82,407.3 870.64,406.2 871.46,427.1 872.28,414.6 873.09,406.0 873.91,413.0 874.73,406.9 875.55,399.6 876.37,399.3 877.18,397.7 878.00,401.2 878.82,411.0 879.64,408.0 880.46,410.8 881.27,411.3 882.09,409.8 882.91,427.0 883.73,411.5 884.55,408.1 885.36,418.7 886.18,408.1 887.00,402.1" fill="none" stroke="#e8e218" stroke-width="1.9" stroke-linejoin="miter"></polyline>
<path d="M69,48 V479 H887 V48 Z" fill="none" stroke="#a8a8a8" stroke-width="2"></path>
<rect x="245.5" y="54.5" width="117" height="56" rx="3" fill="#000" stroke="#e8784c" stroke-width="1.6"></rect>
<path d="M232,96.3 L245.5,90.5 L245.5,98 Z" fill="#ff7f50"></path>
<g fill="#ff7f50" font-size="15" text-anchor="middle"><text x="304" y="71" font-size="15.45" textLength="55.02" lengthAdjust="spacingAndGlyphs">Marker4</text><text x="304" y="88" font-size="15.45" textLength="85.06" lengthAdjust="spacingAndGlyphs">470.000MHz</text><text x="304" y="105.5" font-size="15.45" textLength="73.38" lengthAdjust="spacingAndGlyphs">-96.00dBm</text></g>
<g fill="#1c8ada" font-size="15" font-weight="bold" text-anchor="middle"><text x="477.5" y="129.3" font-size="15.45" textLength="57.55" lengthAdjust="spacingAndGlyphs">Marker1</text><text x="478" y="145.5" font-size="15.45" textLength="85.06" lengthAdjust="spacingAndGlyphs">500.000MHz</text><text x="478" y="162.8" font-size="15.45" textLength="75.88" lengthAdjust="spacingAndGlyphs">-41.00dBm</text></g>
<path d="M463.5,168 L492,168 L477.8,194 Z" fill="#fff" stroke="#e8f03c" stroke-width="1.7" stroke-linejoin="miter"></path>
<text x="478" y="182" font-size="14" fill="#303048" text-anchor="middle">1</text>
<g fill="#ff7f50" font-size="15" text-anchor="middle" transform="translate(648.5,93) rotate(-90)"><text x="0" y="-12" font-size="15.45" textLength="55.02" lengthAdjust="spacingAndGlyphs">Marker2</text><text x="0" y="5.5" font-size="15.45" textLength="85.06" lengthAdjust="spacingAndGlyphs">520.000MHz</text><text x="0" y="22.5" font-size="15.45" textLength="73.38" lengthAdjust="spacingAndGlyphs">-94.50dBm</text></g>
<g fill="#ff7f50" font-size="15" text-anchor="middle" transform="translate(722.5,169) rotate(-90)"><text x="0" y="5.5" font-size="15.45" textLength="237.91" lengthAdjust="spacingAndGlyphs">Marker3 | 530.000MHz | -94.50dBm</text></g>
<g fill="#f2f2f2" font-size="15" text-anchor="end">
<text x="63" y="53.0" font-size="15.45" textLength="20.86" lengthAdjust="spacingAndGlyphs">0.0</text>
<text x="63" y="96.2" font-size="15.45" textLength="34.20" lengthAdjust="spacingAndGlyphs">-12.0</text>
<text x="63" y="139.3" font-size="15.45" textLength="34.20" lengthAdjust="spacingAndGlyphs">-24.0</text>
<text x="63" y="182.4" font-size="15.45" textLength="34.20" lengthAdjust="spacingAndGlyphs">-36.0</text>
<text x="63" y="225.6" font-size="15.45" textLength="34.20" lengthAdjust="spacingAndGlyphs">-48.0</text>
<text x="63" y="268.8" font-size="15.45" textLength="34.20" lengthAdjust="spacingAndGlyphs">-60.0</text>
<text x="63" y="311.9" font-size="15.45" textLength="34.20" lengthAdjust="spacingAndGlyphs">-72.0</text>
<text x="63" y="355.1" font-size="15.45" textLength="34.20" lengthAdjust="spacingAndGlyphs">-84.0</text>
<text x="63" y="398.2" font-size="15.45" textLength="34.20" lengthAdjust="spacingAndGlyphs">-96.0</text>
<text x="63" y="441.4" font-size="15.45" textLength="42.55" lengthAdjust="spacingAndGlyphs">-108.0</text>
<text x="63" y="484.5" font-size="15.45" textLength="42.55" lengthAdjust="spacingAndGlyphs">-120.0</text>
</g>
<text transform="translate(14,263.5) rotate(-90)" font-size="15.45" fill="#afd5e2" text-anchor="middle" textLength="30.84" lengthAdjust="spacingAndGlyphs">dBm</text>
<text x="31" y="23.8" font-size="15.45" fill="#afd5e2" textLength="94.22" lengthAdjust="spacingAndGlyphs">RFEPro v1.24</text>
<text x="478" y="28.8" font-size="15.45" font-weight="bold" fill="#f4f4f4" text-anchor="middle" textLength="100.88" lengthAdjust="spacingAndGlyphs">Preset Default</text>
<g font-size="15" font-weight="bold" fill="#f4f4f4" text-anchor="middle"><text x="68.5" y="499.5" font-size="15.45" textLength="54.23" lengthAdjust="spacingAndGlyphs">450.000</text><text x="478" y="499.5" font-size="15.45" textLength="89.22" lengthAdjust="spacingAndGlyphs">500.000 MHz</text><text x="887" y="499.5" font-size="15.45" textLength="54.23" lengthAdjust="spacingAndGlyphs">550.000</text></g>
<g font-size="15" fill="#afd5e2" text-anchor="middle"><text x="273.5" y="499.5" font-size="15.45" textLength="83.09" lengthAdjust="spacingAndGlyphs">Offset 0MHz</text><text x="682.5" y="499.5" font-size="15.45" textLength="95.06" lengthAdjust="spacingAndGlyphs">Span 100MHz</text><text x="84.5" y="517.3" font-size="15.45" textLength="102.55" lengthAdjust="spacingAndGlyphs">ARBW 100KHz</text><text x="273.5" y="517.3" font-size="15.45" textLength="168.48" lengthAdjust="spacingAndGlyphs">2025-09-23 07:43:39.515</text><text x="478" y="517.3" font-size="15.45" textLength="65.88" lengthAdjust="spacingAndGlyphs">1/298 min</text><text x="682.5" y="517.3" font-size="15.45" textLength="86.72" lengthAdjust="spacingAndGlyphs">Step 0.1MHz</text></g>
<text x="940.5" y="517.3" font-size="15.45" fill="#afd5e2" text-anchor="end" xml:space="preserve" textLength="140.09" lengthAdjust="spacingAndGlyphs">Swp 358ms  1001pts</text>
<rect x="68" y="535" width="820" height="211" fill="#7392d0"></rect>
<rect x="68" y="535" width="820" height="211" fill="#fff" filter="url(#wfnoise)"></rect>
<rect x="461" y="535" width="15" height="211" fill="#ffffff" opacity="0.10"></rect>
<rect x="472" y="535" width="4.5" height="211" fill="#a8c8e8" opacity="0.6"></rect>
<rect x="476.5" y="535" width="4" height="211" fill="#dcec68"></rect>
<rect x="480.5" y="535" width="4" height="211" fill="#b0d8dc" opacity="0.75"></rect>
<line x1="232.8" y1="537.5" x2="232.8" y2="746" stroke="#0a0e2e" stroke-width="2.6" stroke-linecap="round" stroke-dasharray="0.4 4.6"></line>
<line x1="478.6" y1="537.5" x2="478.6" y2="746" stroke="#000" stroke-width="2.6" stroke-linecap="round" stroke-dasharray="0.4 4.6"></line>
<line x1="640.8" y1="537.5" x2="640.8" y2="746" stroke="#0a0e2e" stroke-width="2.6" stroke-linecap="round" stroke-dasharray="0.4 4.6"></line>
<line x1="722.8" y1="537.5" x2="722.8" y2="746" stroke="#0a0e2e" stroke-width="2.6" stroke-linecap="round" stroke-dasharray="0.4 4.6"></line>
<path d="M68.5,746 V535.5 H888" fill="none" stroke="#d0d8e8" stroke-width="1.2"></path>
<path d="M68.5,745.5 H887.5 V535" fill="none" stroke="#9aa0b0" stroke-width="1"></path>
<rect x="836.4" y="6.3" width="38.3" height="36.2" rx="4.5" fill="#5c5c5c" stroke="#a8a8a8" stroke-width="2.6"></rect>
<text x="840.6" y="26.4" font-size="23" fill="#dadada" textLength="30" lengthAdjust="spacingAndGlyphs">DM</text>
<rect x="841.3" y="29.9" width="6.8" height="8.6" fill="none" stroke="#c4c4c4" stroke-width="1.6"></rect>
<text x="851.2" y="39.4" font-size="14.5" font-weight="bold" fill="#d4d4d4" textLength="21.5" lengthAdjust="spacingAndGlyphs">OFF</text>
<g fill="none" stroke="#fff" stroke-width="2.1"><path d="M899.2,5.2 V12 M903.9,5.2 V12"></path><path d="M897.1,12 H906.9 V21.6 L902,25.4 L897.1,21.6 Z"></path><path d="M902,25.4 V36.2"></path></g>
<path d="M910,12.4 H931 V34.9 H905.2" fill="none" stroke="#fff" stroke-width="2.5"></path>
<path d="M909.6,16 H927.8 V30.7 H905.6 V21.3 Z" fill="#fff"></path>
<rect x="931" y="19.1" width="4" height="8.6" fill="#fff"></rect>
<text x="915" y="54.5" font-size="15.45" fill="#afd5e2" text-anchor="middle" textLength="48.38" lengthAdjust="spacingAndGlyphs">B100%</text>
<g fill="none" stroke="#fff" stroke-width="2.5" stroke-linejoin="miter"><path d="M904.2,77 L893.2,89.5 L904.8,100.8 L913.5,100.5 L914.3,92 Z"></path><path d="M924.3,103.8 L937,115.3 L926,127 L915.7,116 L915.7,108 Z"></path></g>
<circle cx="916" cy="101.5" r="5.5" fill="#fff"></circle>
<text x="915" y="156.3" font-size="15.45" fill="#afd5e2" text-anchor="middle" textLength="25.84" lengthAdjust="spacingAndGlyphs">DIR</text>
<text x="915" y="185.8" font-size="15.45" fill="#afd5e2" text-anchor="middle" textLength="32.53" lengthAdjust="spacingAndGlyphs">LIVE</text>
<g fill="none" stroke="#d8d8d8" stroke-width="1.8"><rect x="909.2" y="210.3" width="11.5" height="10.5" rx="2"></rect><rect x="893.8" y="246" width="11" height="11.5" rx="2"></rect><rect x="909.2" y="246" width="11.5" height="11.5" rx="2"></rect><rect x="925.2" y="246" width="11.5" height="11.5" rx="2"></rect><path d="M915,221 V246 M899.3,246 V232.5 H931 V246"></path></g>
<path d="M942.5,0 V746.5 H1098" fill="none" stroke="#909090" stroke-width="2"></path>
<line x1="942" y1="0.8" x2="1098" y2="0.8" stroke="#707070" stroke-width="1.5"></line>
<text x="949" y="21.3" font-size="15.45" font-weight="bold" fill="#f4f4f4" textLength="127.56" lengthAdjust="spacingAndGlyphs">M1: 0500.000 MHz</text>
<text x="954" y="38.7" font-size="15.45" fill="#f4f4f4" textLength="99.78" lengthAdjust="spacingAndGlyphs">RT: -41.00dBm</text>
<text x="954" y="56.1" font-size="15.45" fill="#ea7464" textLength="112.55" lengthAdjust="spacingAndGlyphs">MxH: -41.00dBm</text>
<text x="949" y="73.5" font-size="15.45" font-weight="bold" fill="#f4f4f4" textLength="127.56" lengthAdjust="spacingAndGlyphs">M2: 0520.000 MHz</text>
<text x="954" y="90.9" font-size="15.45" fill="#f4f4f4" textLength="99.78" lengthAdjust="spacingAndGlyphs">RT: -94.50dBm</text>
<text x="954" y="108.3" font-size="15.45" fill="#ea7464" textLength="112.55" lengthAdjust="spacingAndGlyphs">MxH: -94.50dBm</text>
<text x="949" y="125.7" font-size="15.45" font-weight="bold" fill="#f4f4f4" textLength="127.56" lengthAdjust="spacingAndGlyphs">M3: 0530.000 MHz</text>
<text x="954" y="143.1" font-size="15.45" fill="#f4f4f4" textLength="108.13" lengthAdjust="spacingAndGlyphs">RT: -100.50dBm</text>
<text x="954" y="160.5" font-size="15.45" fill="#ea7464" textLength="112.55" lengthAdjust="spacingAndGlyphs">MxH: -94.50dBm</text>
<text x="949" y="177.9" font-size="15.45" font-weight="bold" fill="#f4f4f4" textLength="127.56" lengthAdjust="spacingAndGlyphs">M4: 0470.000 MHz</text>
<text x="954" y="195.3" font-size="15.45" fill="#f4f4f4" textLength="108.13" lengthAdjust="spacingAndGlyphs">RT: -102.00dBm</text>
<text x="954" y="212.7" font-size="15.45" fill="#ea7464" textLength="112.55" lengthAdjust="spacingAndGlyphs">MxH: -96.00dBm</text>
<rect x="1098" y="0" width="182" height="800" fill="#808080"></rect>
<rect x="1105.5" y="2.0" width="167.5" height="60" fill="#808080" stroke="#1c78d0" stroke-width="2.4"></rect>
<rect x="1107.8" y="4.3" width="163" height="55.5" fill="none" stroke="#e8e8e8" stroke-width="1.2"></rect>
<text x="1188" y="40.1" font-size="24" fill="#fafafa" text-anchor="middle">Mode</text>
<rect x="1106.5" y="66.7" width="165.5" height="58" fill="#808080" stroke="#e4e4e4" stroke-width="3"></rect>
<text x="1188" y="103.8" font-size="24" fill="#fafafa" text-anchor="middle">Config</text>
<rect x="1106.5" y="130.4" width="165.5" height="58" fill="#808080" stroke="#e4e4e4" stroke-width="3"></rect>
<text x="1188" y="167.5" font-size="24" fill="#fafafa" text-anchor="middle">Amplitude</text>
<rect x="1106.5" y="194.2" width="165.5" height="58" fill="#808080" stroke="#e4e4e4" stroke-width="3"></rect>
<text x="1188" y="231.3" font-size="24" fill="#fafafa" text-anchor="middle">Frequency</text>
<rect x="1106.5" y="257.9" width="165.5" height="58" fill="#808080" stroke="#e4e4e4" stroke-width="3"></rect>
<text x="1188" y="295.0" font-size="24" fill="#fafafa" text-anchor="middle">Generator</text>
<rect x="1106.5" y="321.6" width="165.5" height="58" fill="#808080" stroke="#e4e4e4" stroke-width="3"></rect>
<text x="1188" y="358.7" font-size="24" fill="#fafafa" text-anchor="middle">Marker</text>
<rect x="1106.5" y="385.3" width="165.5" height="58" fill="#808080" stroke="#e4e4e4" stroke-width="3"></rect>
<text x="1188" y="422.4" font-size="24" fill="#fafafa" text-anchor="middle">File</text>
<rect x="1106.5" y="449.0" width="165.5" height="58" fill="#808080" stroke="#e4e4e4" stroke-width="3"></rect>
<text x="1188" y="486.1" font-size="24" fill="#fafafa" text-anchor="middle">Presets</text>
<rect x="1106.5" y="512.8" width="165.5" height="58" fill="#808080" stroke="#e4e4e4" stroke-width="3"></rect>
<text x="1188" y="549.9" font-size="24" fill="#fafafa" text-anchor="middle">Report</text>
<rect x="1106.5" y="576.5" width="165.5" height="58" fill="#808080" stroke="#e4e4e4" stroke-width="3"></rect>
<text x="1188" y="613.6" font-size="24" fill="#fafafa" text-anchor="middle">HELP</text>
<rect x="1106.5" y="640.2" width="165.5" height="58" fill="#808080" stroke="#e4e4e4" stroke-width="3"></rect>
<text x="1188" y="677.3" font-size="24" fill="#fafafa" text-anchor="middle">System</text>
<rect x="1106.5" y="703.9" width="165.5" height="58" fill="#808080" stroke="#e4e4e4" stroke-width="3"></rect>
<text x="1188" y="741.0" font-size="24" fill="#fafafa" text-anchor="middle">Exit</text>
<rect x="3.0" y="756.5" width="54.0" height="35.5" fill="#a9a9a9" stroke="#e2e2e2" stroke-width="3"></rect>
<rect x="70.0" y="756.5" width="54.5" height="35.5" fill="#a9a9a9" stroke="#e2e2e2" stroke-width="3"></rect>
<rect x="717.5" y="756.5" width="55" height="35.5" fill="#a9a9a9" stroke="#d4d4d4" stroke-width="3"></rect>
<rect x="785.0" y="756.5" width="55.0" height="35.5" fill="#a9a9a9" stroke="#d4d4d4" stroke-width="3"></rect>
<rect x="852.5" y="756.5" width="88.5" height="35.5" fill="#a9a9a9" stroke="#e2e2e2" stroke-width="3"></rect>
<rect x="954.0" y="756.5" width="54.5" height="35.5" fill="#a9a9a9" stroke="#e2e2e2" stroke-width="3"></rect>
<rect x="1021.5" y="756.5" width="67" height="35.5" fill="#a9a9a9" stroke="#e2e2e2" stroke-width="3"></rect>
<g fill="none" stroke="#fafafa" stroke-width="2.1" stroke-linejoin="miter"><path d="M25.8,769.4 L13.9,775.5 L25.8,781.6 M43.4,769.4 L31.5,775.5 L43.4,781.6 M102.3,769.4 L90.4,775.5 L102.3,781.6"></path><path d="M976.5,764 V787.5 M984.5,764 V787.5"></path></g>
<g fill="none" stroke="#3a3a3a" stroke-width="2.1" stroke-linejoin="miter"><path d="M738,769.4 L749.9,775.5 L738,781.6 M796.6,769.4 L808.5,775.5 L796.6,781.6 M814.3,769.4 L826.2,775.5 L814.3,781.6"></path></g>
<text x="875.5" y="783.5" font-size="24" fill="#fafafa" textLength="41.5" lengthAdjust="spacingAndGlyphs">Play</text>
<text x="1030" y="783.2" font-size="24" fill="#fafafa" textLength="47" lengthAdjust="spacingAndGlyphs">Hold</text>
<rect x="143" y="773" width="535" height="3.6" fill="#4a8ee0"></rect>
<ellipse cx="690" cy="774.5" rx="17.5" ry="19" fill="url(#thumb)" stroke="#1a7ce8" stroke-width="1"></ellipse>
</svg></body></html>
